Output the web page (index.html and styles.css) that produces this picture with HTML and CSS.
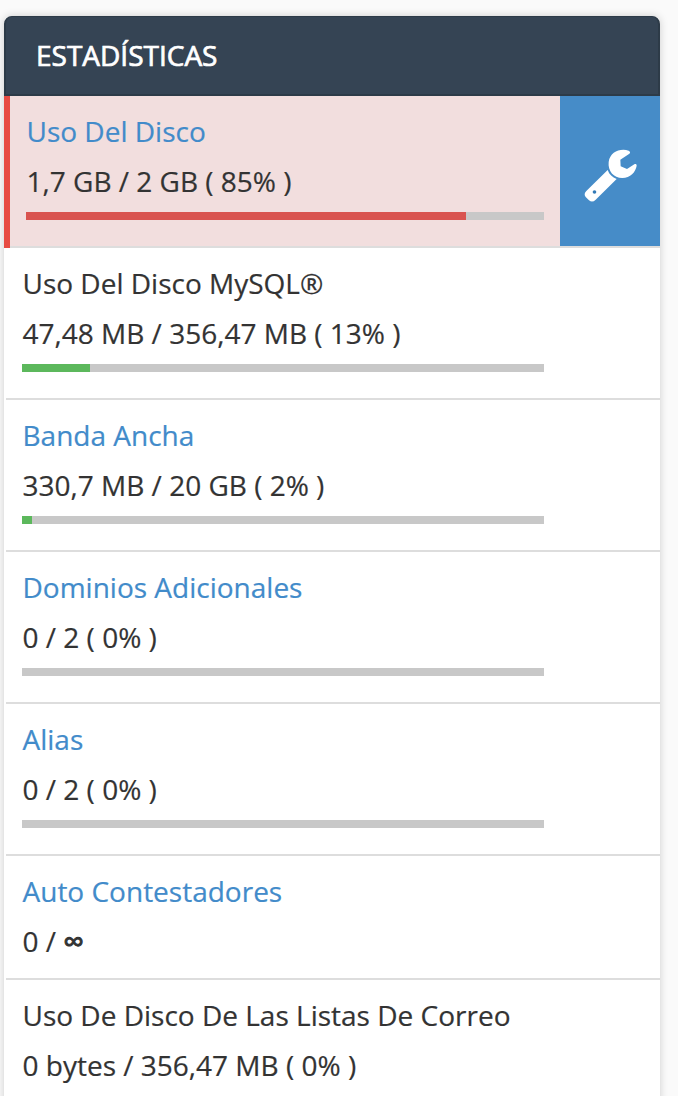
FILE: index.html
```html
<!DOCTYPE html>
<html lang="es">
<head>
<meta charset="utf-8">
<title>Estadísticas</title>
<link rel="stylesheet" href="styles.css">
</head>
<body>
<section class="panel">
  <h2 class="panel-title">ESTADÍSTICAS</h2>
  <div class="stat stat-danger">
    <div class="stat-body">
      <a class="stat-name link">Uso Del Disco</a>
      <span class="stat-value">1,7 GB / 2 GB ( 85% )</span>
      <div class="bar"><div class="fill fill-danger" style="width: 85%"></div></div>
    </div>
    <a class="fix-button" aria-label="Reparar">
      <svg class="wrench" viewBox="108 171 204 204">
        <path fill="#fff" d="M266 212C240 204 210 216 206 246C203 273 221 294 247 294C271 294 287 276 290 257C290 252 287 251 283 253L261 267L242 259L241 239L267 222C272 219 271 214 266 212Z"/>
        <path fill="#fff" d="M203 270C208 284 217 292 230 297L167 359Q157 369 147 361L137 351Q130 342 139 333Z"/>
        <circle cx="163.500" cy="336" r="5.500" fill="#337ab7"/>
      </svg>
    </a>
  </div>
  <div class="stat">
    <div class="stat-body">
      <span class="stat-name">Uso Del Disco MySQL®</span>
      <span class="stat-value">47,48 MB / 356,47 MB ( 13% )</span>
      <div class="bar"><div class="fill" style="width: 13%"></div></div>
    </div>
  </div>
  <div class="stat">
    <div class="stat-body">
      <a class="stat-name link">Banda Ancha</a>
      <span class="stat-value">330,7 MB / 20 GB ( 2% )</span>
      <div class="bar"><div class="fill" style="width: 2%"></div></div>
    </div>
  </div>
  <div class="stat">
    <div class="stat-body">
      <a class="stat-name link">Dominios Adicionales</a>
      <span class="stat-value">0 / 2 ( 0% )</span>
      <div class="bar"></div>
    </div>
  </div>
  <div class="stat">
    <div class="stat-body">
      <a class="stat-name link">Alias</a>
      <span class="stat-value">0 / 2 ( 0% )</span>
      <div class="bar"></div>
    </div>
  </div>
  <div class="stat">
    <div class="stat-body">
      <a class="stat-name link">Auto Contestadores</a>
      <span class="stat-value">0 / <span class="infinity">∞</span></span>
    </div>
  </div>
  <div class="stat">
    <div class="stat-body">
      <span class="stat-name">Uso De Disco De Las Listas De Correo</span>
      <span class="stat-value">0 bytes / 356,47 MB ( 0% )</span>
      <div class="bar"></div>
    </div>
  </div>
</section>
</body>
</html>
```
FILE: styles.css
```css
* { box-sizing: border-box; }
html { height: 100%; overflow: hidden; }
body {
  height: 100%;
  margin: 0;
  padding: 16px 18px 0 4px;
  overflow: hidden;
  background: #fafafa;
  color: #333;
  font: 28px/40px "Open Sans", sans-serif;
  -webkit-text-stroke: 0.2px;
}
.panel {
  border-radius: 8px 8px 0 0;
  background: #fff;
  box-shadow: 0 0 8px rgba(0, 0, 0, 0.18);
}
.panel-title {
  height: 80px;
  margin: 0;
  padding: 18px 30px;
  border: 2px solid #2d3b48;
  border-top-width: 1px;
  border-radius: 8px 8px 0 0;
  background: #354454;
  color: #fff;
  font-size: 28px;
  font-weight: 400;
  -webkit-text-stroke: 0.7px;
}
.stat {
  display: flex;
  justify-content: space-between;
  margin-left: 2px;
  border-bottom: 2px solid #ddd;
}
.stat-body {
  display: flex;
  flex-direction: column;
  gap: 10px;
  width: 538px;
  padding: 15px 0 17px 16px;
  text-indent: 0.5px;
  white-space: nowrap;
}
.stat-danger {
  position: relative;
  margin-left: 0;
  padding-left: 6px;
  background: #f2dede;
}
.stat-danger::before {
  content: "";
  position: absolute;
  inset: 0 auto -2px 0;
  width: 6px;
  background: #e74c43;
}
.stat-danger .stat-body { width: 534px; }
.link { color: #428bca; }
.bar {
  height: 8px;
  margin: 1px 0 9px;
  background: #c8c8c8;
}
.fill {
  height: 100%;
  background: #5cb85c;
}
.fill-danger { background: #d9534f; }
.fix-button {
  display: flex;
  align-items: center;
  justify-content: center;
  width: 100px;
  background: #468cc8;
}
.wrench { width: 68px; height: 68px; }
.infinity {
  font-size: 29px;
  line-height: 1;
  -webkit-text-stroke: 1px;
}
```
